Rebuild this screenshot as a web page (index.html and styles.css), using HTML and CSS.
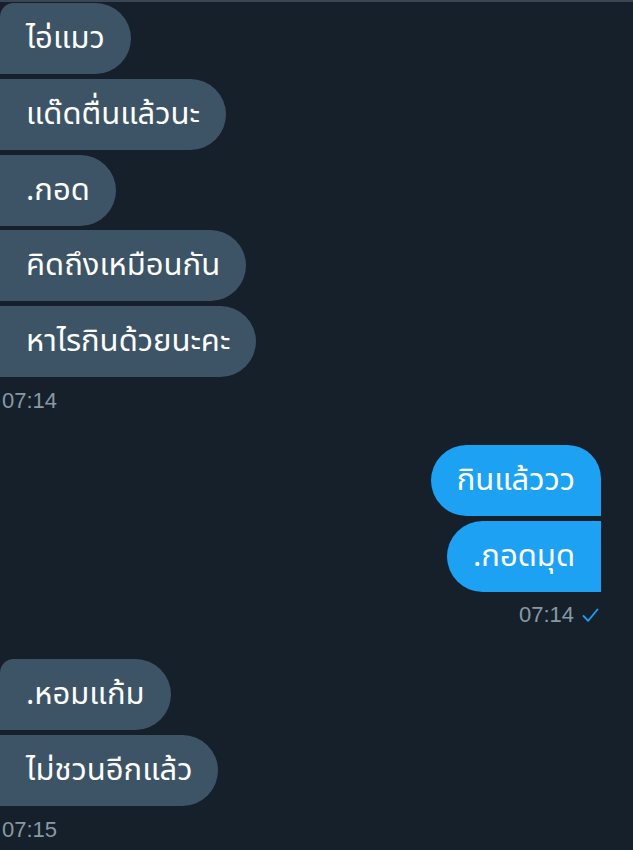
FILE: index.html
```html
<!DOCTYPE html>
<html lang="th">
<head>
<meta charset="utf-8">
<link rel="stylesheet" href="styles.css">
</head>
<body>
<div class="chat">
  <div class="group in">
    <div class="bubble first">ไอ่แมว</div>
    <div class="bubble">แด๊ดตื่นแล้วนะ</div>
    <div class="bubble">.กอด</div>
    <div class="bubble">คิดถึงเหมือนกัน</div>
    <div class="bubble">หาไรกินด้วยนะคะ</div>
    <div class="time">07:14</div>
  </div>
  <div class="group out">
    <div class="bubble first">กินแล้ววว</div>
    <div class="bubble">.กอดมุด</div>
    <div class="time">07:14 <svg class="check" width="17" height="15" viewBox="0 0 17 15"><path d="M1.5 8 L6.2 12.8 L15.5 1.5" fill="none" stroke="#1da1f2" stroke-width="1.8" stroke-linecap="round" stroke-linejoin="round"/></svg></div>
  </div>
  <div class="group in">
    <div class="bubble first">.หอมแก้ม</div>
    <div class="bubble">ไม่ชวนอีกแล้ว</div>
    <div class="time">07:15</div>
  </div>
</div>
</body>
</html>
```
FILE: styles.css
```css
html, body {
  margin: 0;
  padding: 0;
  background: #15202b;
}
body {
  width: 633px;
  height: 850px;
  overflow: hidden;
  font-family: "Noto Sans Thai", "Noto Sans", "DejaVu Sans", sans-serif;
}
.chat {
  border-top: 2px solid #3a4653;
  padding-top: 1px;
  display: flex;
  flex-direction: column;
}
.group {
  display: flex;
  flex-direction: column;
  gap: 4.75px;
  margin-bottom: 32px;
}
.group.in { align-items: flex-start; }
.group.out { align-items: flex-end; padding-right: 32px; }
.bubble {
  height: 71px;
  box-sizing: border-box;
  display: flex;
  align-items: center;
  padding: 0 26px;
  font-size: 31px;
  color: #ffffff;
  white-space: nowrap;
}
.in .bubble {
  background: #3d5466;
  border-radius: 0 36px 36px 0;
}
.in .bubble.first { border-top-left-radius: 14px; }
.out .bubble {
  background: #1da1f2;
  border-radius: 36px 0 0 36px;
}
.out .bubble.first { border-top-right-radius: 34px; }
.time {
  margin-top: 7px;
  line-height: 24px;
  font-family: "Liberation Sans", Arial, sans-serif;
  font-size: 22px;
  color: #8899a6;
  padding-left: 2px;
  display: flex;
  align-items: center;
  gap: 8px;
}
.out .time { padding-left: 0; padding-right: 2px; }
.check { display: block; }
```
